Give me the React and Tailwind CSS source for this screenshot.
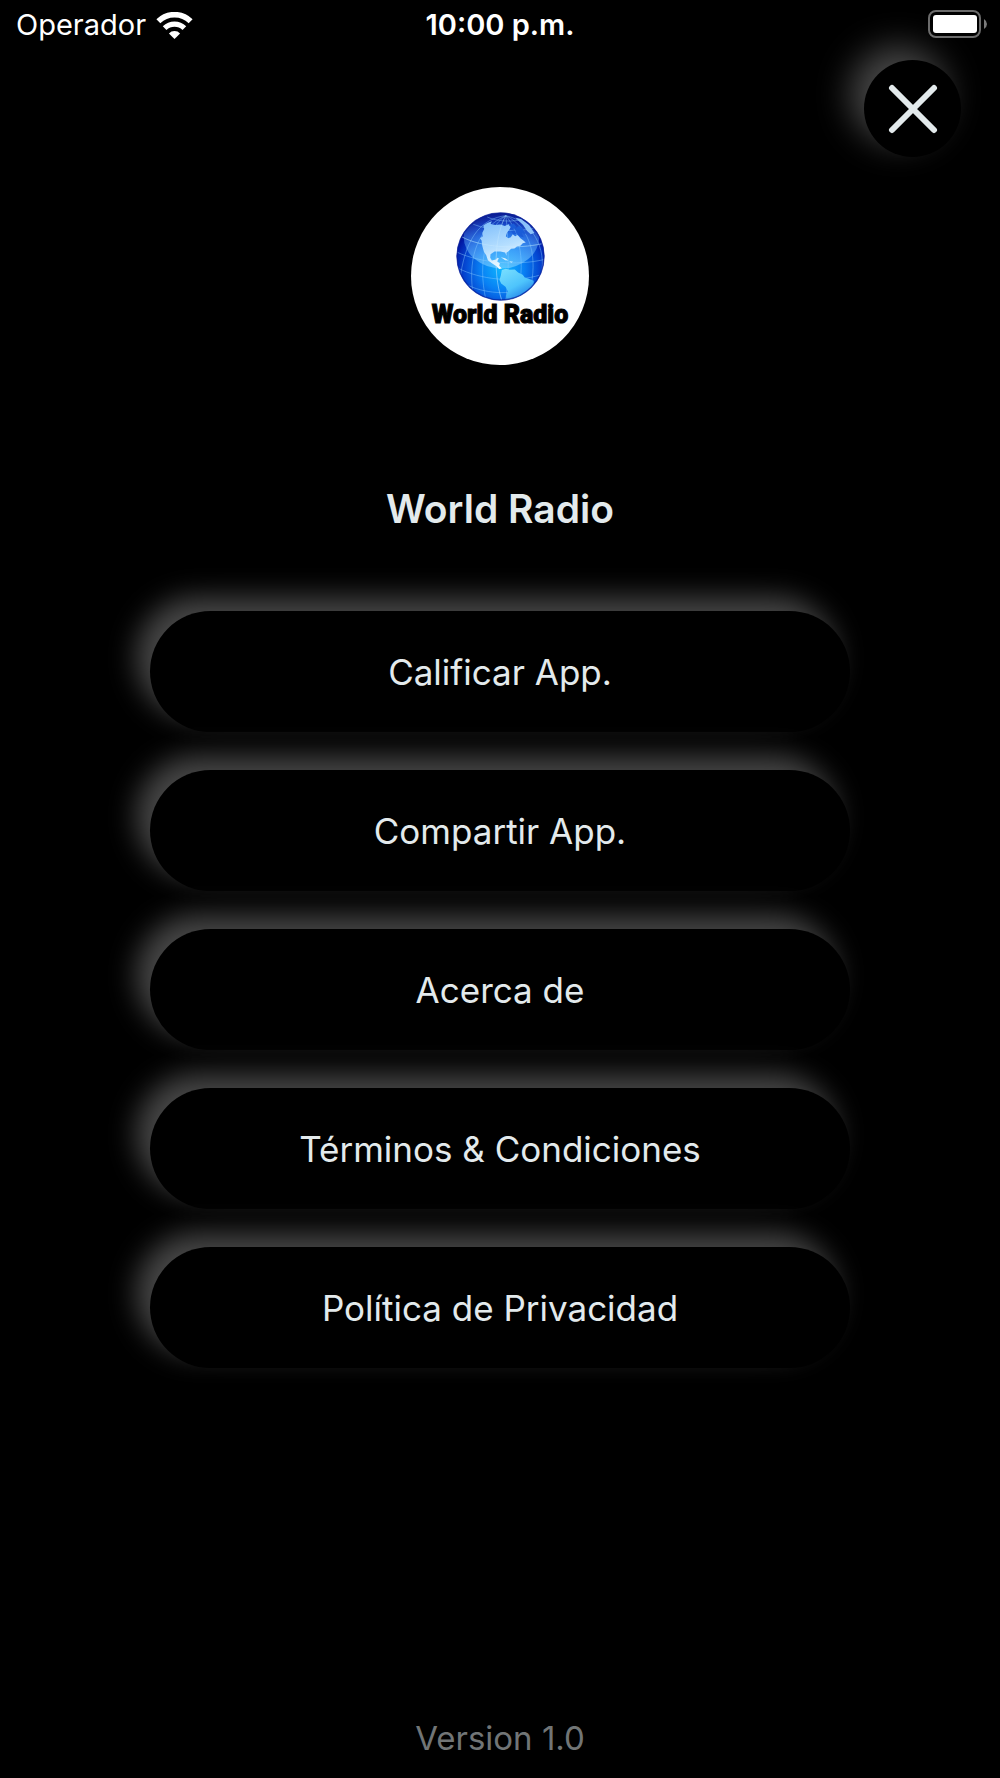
const menuItems = [
  "Calificar App.",
  "Compartir App.",
  "Acerca de",
  "Términos & Condiciones",
  "Política de Privacidad",
];

function WifiIcon() {
  return (
    <svg viewBox="0 0 110 82" className="h-[27px] w-[37px]" aria-hidden="true">
      <g fill="none" stroke="#fff">
        <path d="M6 28 A70 70 0 0 1 104 28" strokeWidth="17" />
        <path d="M25 49 A43 43 0 0 1 85 49" strokeWidth="16" />
      </g>
      <path d="M55 82 L38 65 A24 24 0 0 1 72 65 Z" fill="#fff" />
    </svg>
  );
}

function BatteryIcon() {
  return (
    <svg viewBox="0 0 60 28" className="h-[28px] w-[60px]" aria-hidden="true">
      <rect x="1" y="1" width="51" height="26" rx="7" fill="none" stroke="#6b6b6b" strokeWidth="2" />
      <rect x="5" y="5" width="44" height="18" rx="3" fill="#fff" />
      <path d="M56 9 Q59 11 59 14 Q59 17 56 19 Z" fill="#7a7a7a" />
    </svg>
  );
}

function StatusBar() {
  return (
    <header className="grid h-[60px] grid-cols-3 items-start pt-[7px] text-[29px] leading-[36px] text-white">
      <div className="flex items-center gap-[10px] pl-4">
        <span>Operador</span>
        <WifiIcon />
      </div>
      <span className="text-center font-semibold">10:00 p.m.</span>
      <div className="flex h-[34px] items-center justify-end pr-3">
        <BatteryIcon />
      </div>
    </header>
  );
}

function Globe() {
  return (
    <svg viewBox="168 111 268 268" className="h-[89px] w-[89px]" aria-hidden="true">
      <defs>
        <radialGradient id="sea" cx="0.52" cy="0.64" r="0.62">
          <stop offset="0" stopColor="#10b8ff" />
          <stop offset="0.4" stopColor="#0880f4" />
          <stop offset="0.7" stopColor="#0444d0" />
          <stop offset="0.9" stopColor="#0218a4" />
          <stop offset="1" stopColor="#020c88" />
        </radialGradient>
        <linearGradient id="shine" x1="0" y1="0" x2="0" y2="1">
          <stop offset="0" stopColor="#3f8cf0" stopOpacity="0" />
          <stop offset="0.5" stopColor="#5fb0ff" stopOpacity="0.4" />
          <stop offset="1" stopColor="#7fd0ff" stopOpacity="0.65" />
        </linearGradient>
        <linearGradient id="land" x1="0" y1="0" x2="0.3" y2="1">
          <stop offset="0" stopColor="#7cbcfa" />
          <stop offset="0.6" stopColor="#b4deff" />
          <stop offset="1" stopColor="#f2fbff" />
        </linearGradient>
        <linearGradient id="south" x1="0" y1="0" x2="0.6" y2="1">
          <stop offset="0" stopColor="#7ce0ff" />
          <stop offset="0.6" stopColor="#4ec4fc" />
          <stop offset="1" stopColor="#2080e8" />
        </linearGradient>
        <clipPath id="disc">
          <circle cx="302" cy="245" r="132" />
        </clipPath>
      </defs>
      <circle cx="302" cy="245" r="132" fill="url(#sea)" />
      <g clipPath="url(#disc)">
        <ellipse cx="305" cy="185" rx="114" ry="96" fill="url(#shine)" />
        <g fill="none" stroke="#8ccfff" strokeOpacity="0.65" strokeWidth="2">
          <path d="M318 122 C250 130 200 180 182 300" />
          <path d="M318 122 C235 160 205 240 218 350" />
          <path d="M318 122 C260 160 232 260 258 375" />
          <path d="M318 122 C290 170 275 280 306 378" />
          <path d="M318 122 C325 180 330 280 318 378" />
          <path d="M318 122 C360 170 380 270 350 370" />
          <path d="M318 122 C395 160 415 250 390 350" />
          <path d="M318 122 C400 140 440 220 425 300" />
          <path d="M262 126 C290 140 345 142 368 132" />
          <path d="M220 148 C270 168 350 172 404 160" />
          <path d="M186 186 C245 218 350 224 430 206" />
          <path d="M171 232 C240 264 350 274 434 254" />
          <path d="M174 280 C240 314 340 326 424 300" />
          <path d="M196 328 C250 356 330 364 396 338" />
        </g>
        <path
          d="M250 152 L262 144 L276 139 L272 147 L286 150 L302 149 L315 153 L326 148 L334 153 L329 164 L322 172 L318 184 L325 190 L333 187 L339 178 L346 184 L354 180 L362 190 L370 196 L378 203 L369 205 L362 213 L352 214 L344 221 L334 222 L326 229 L320 234 L320 243 L316 233 L302 230 L284 230 L272 238 L271 249 L276 257 L288 254 L293 249 L297 250 L292 260 L300 265 L298 273 L306 281 L298 283 L290 274 L276 265 L264 256 L259 241 L252 231 L247 213 L245 197 L240 190 L249 184 L247 174 L253 162 Z"
          fill="url(#land)"
        />
        <path
          d="M327 151 L342 146 L350 156 L340 162 Z M345 163 L357 153 L368 161 L379 178 L366 174 L372 187 L358 184 Z M334 168 L344 166 L350 177 L340 178 Z"
          fill="#1a5cd8"
        />
        <path d="M347 128 L364 132 L388 150 L404 174 L393 178 L382 168 L370 150 Z" fill="#8cc2fa" />
        <path d="M303 247 L316 250 L326 257 L316 256 Z M328 259 L340 261 L334 264 Z" fill="#d4f0ff" />
        <path
          d="M306 286 L318 282 L330 285 L345 284 L355 293 L369 300 L375 308 L389 313 L402 318 L402 330 L392 342 L379 350 L366 361 L350 369 L338 378 L320 376 L319 364 L324 350 L317 336 L304 326 L299 316 L303 302 Z"
          fill="url(#south)"
        />
        <g fill="none" stroke="#d8f2ff" strokeOpacity="0.4" strokeWidth="2">
          <path d="M186 186 C245 218 350 224 430 206" />
          <path d="M318 122 C290 170 275 280 306 378" />
        </g>
      </g>
      <circle cx="302" cy="245" r="131" fill="none" stroke="#0a1f98" strokeOpacity="0.7" strokeWidth="4" />
    </svg>
  );
}

function Logo() {
  return (
    <div className="flex size-[178px] flex-col items-center rounded-full bg-white pt-[25px]">
      <Globe />
      <span className="font-['Roboto',sans-serif] text-[25px] leading-[28px] font-black whitespace-nowrap text-black [-webkit-text-stroke:1px_#000]">
        World Radio
      </span>
    </div>
  );
}

function CloseButton() {
  return (
    <button
      type="button"
      aria-label="Cerrar"
      className="flex size-[97px] items-center justify-center rounded-full bg-black shadow-[-14px_-14px_34px_rgba(255,255,255,0.28)]"
    >
      <svg viewBox="0 0 50 50" className="size-[50px]" aria-hidden="true">
        <path d="M4 4 L46 46 M46 4 L4 46" stroke="#e3eaec" strokeWidth="6" strokeLinecap="round" />
      </svg>
    </button>
  );
}

function MenuButton({ label }) {
  return (
    <button
      type="button"
      className="h-[121px] w-full rounded-full bg-black text-[35px] leading-[44px] shadow-[-14px_-14px_28px_rgba(255,255,255,0.28)]"
    >
      {label}
    </button>
  );
}

function App() {
  return (
    <div className="flex min-h-screen flex-col bg-black font-['Inter',sans-serif] text-[#e3eaec]">
      <StatusBar />
      <div className="flex justify-end pr-[39px]">
        <CloseButton />
      </div>
      <main className="flex flex-col items-center">
        <div className="mt-[30px]">
          <Logo />
        </div>
        <h1 className="mt-[120px] text-[39px] leading-[48px] font-semibold">World Radio</h1>
        <nav className="mt-[78px] flex w-[70%] flex-col gap-[38px]">
          {menuItems.map((item) => (
            <MenuButton key={item} label={item} />
          ))}
        </nav>
      </main>
      <footer className="mt-auto pb-5 text-center text-[33px] leading-[40px] text-[#717576]">
        Version 1.0
      </footer>
    </div>
  );
}

export default App;
